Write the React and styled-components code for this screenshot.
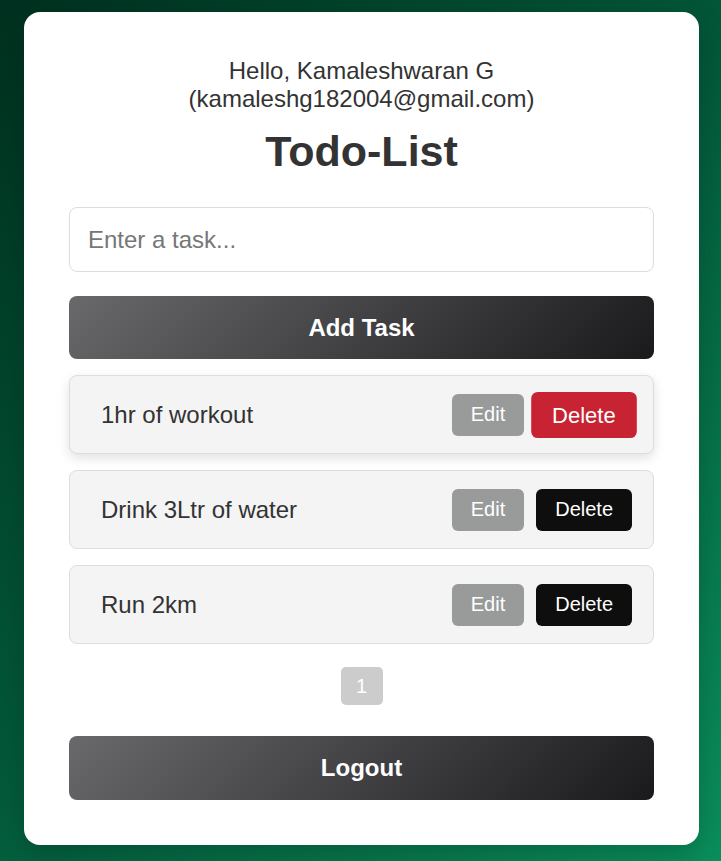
import React, { useState } from 'react';
import styled, { createGlobalStyle, css } from 'styled-components';

const GlobalStyle = createGlobalStyle`
  * {
    box-sizing: border-box;
  }

  body {
    margin: 0;
    font-family: "Liberation Sans", Arial, sans-serif;
    background: linear-gradient(135deg, #00301f 0%, #035a3a 50%, #0a8f5c 100%);
    min-height: 100vh;
  }
`;

const Page = styled.div`
  min-height: 100vh;
  padding: 12px 22px 16px 24px;
  display: flex;
  justify-content: center;
`;

const Card = styled.div`
  width: 100%;
  max-width: 675px;
  background-color: #ffffff;
  border-radius: 16px;
  padding: 45px;
  box-shadow: 0 10px 30px rgba(0, 0, 0, 0.2);
  display: flex;
  flex-direction: column;
`;

const Greeting = styled.p`
  margin: 0;
  text-align: center;
  font-size: 24px;
  line-height: 28px;
  color: #333333;
`;

const Title = styled.h1`
  margin: 14px 0 32px;
  text-align: center;
  font-size: 43px;
  line-height: 48px;
  font-weight: bold;
  color: #333333;
`;

const TaskInput = styled.input`
  height: 65px;
  width: 100%;
  padding: 0 18px;
  font-family: inherit;
  font-size: 24px;
  color: #333333;
  border: 1px solid #dddddd;
  border-radius: 8px;
  outline: none;

  &::placeholder {
    color: #777777;
  }
`;

const GradientButton = styled.button`
  width: 100%;
  height: ${props => props.height || 63}px;
  margin-top: ${props => props.top || 0}px;
  border: none;
  border-radius: 8px;
  background: linear-gradient(135deg, #69696c 0%, #1a1a1d 100%);
  color: #ffffff;
  font-family: inherit;
  font-size: 24px;
  font-weight: bold;
  cursor: pointer;
`;

const TaskList = styled.ul`
  list-style: none;
  margin: 16px 0 0;
  padding: 0;
  display: flex;
  flex-direction: column;
  gap: 16px;
`;

const TaskItem = styled.li`
  height: 79px;
  display: flex;
  align-items: center;
  justify-content: space-between;
  padding: 0 21px 0 31px;
  background-color: #f4f4f4;
  border: 1px solid #dddddd;
  border-radius: 8px;
  transition: box-shadow 0.2s;

  ${props => props.hovered && css`
    box-shadow: 0 4px 12px rgba(0, 0, 0, 0.12);
  `}
`;

const TaskText = styled.span`
  font-size: 24px;
  color: #333333;
`;

const Actions = styled.div`
  display: flex;
  align-items: center;
  gap: 7px;
`;

const SmallButton = styled.button`
  height: 42px;
  padding: 0 19px;
  border: none;
  border-radius: 6px;
  color: #ffffff;
  font-family: inherit;
  font-size: 20px;
  cursor: pointer;
  transition: transform 0.2s, background-color 0.2s;
`;

const EditButton = styled(SmallButton)`
  background-color: #999b9a;
  margin-right: 5px;
`;

const DeleteButton = styled(SmallButton)`
  background-color: #0f0e0e;

  ${props => props.hovered && css`
    background-color: #c82333;
    transform: scale(1.1);
  `}
`;

const Pagination = styled.div`
  display: flex;
  justify-content: center;
  margin-top: 23px;
`;

const PageButton = styled.button`
  width: 42px;
  height: 38px;
  padding: 0;
  border: none;
  border-radius: 5px;
  background-color: #cccccc;
  color: #ffffff;
  font-family: inherit;
  font-size: 20px;
`;

const initialTasks = [
  { id: 1, text: '1hr of workout' },
  { id: 2, text: 'Drink 3Ltr of water' },
  { id: 3, text: 'Run 2km' },
];

const App = () => {
  const [tasks] = useState(initialTasks);
  const [task, setTask] = useState('');
  const hoveredId = 1;

  return (
    <>
      <GlobalStyle />
      <Page>
        <Card>
          <Greeting>
            Hello, Kamaleshwaran G
            <br />
            (kamaleshg182004@gmail.com)
          </Greeting>
          <Title>Todo-List</Title>
          <TaskInput
            placeholder="Enter a task..."
            value={task}
            onChange={e => setTask(e.target.value)}
          />
          <GradientButton top={24}>Add Task</GradientButton>
          <TaskList>
            {tasks.map(t => (
              <TaskItem key={t.id} hovered={t.id === hoveredId}>
                <TaskText>{t.text}</TaskText>
                <Actions>
                  <EditButton>Edit</EditButton>
                  <DeleteButton hovered={t.id === hoveredId}>Delete</DeleteButton>
                </Actions>
              </TaskItem>
            ))}
          </TaskList>
          <Pagination>
            <PageButton>1</PageButton>
          </Pagination>
          <GradientButton top={31} height={64}>Logout</GradientButton>
        </Card>
      </Page>
    </>
  );
};

export default App;
